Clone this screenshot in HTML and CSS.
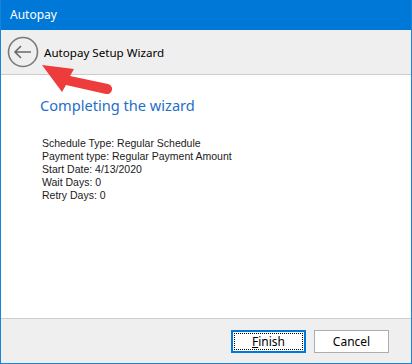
FILE: index.html
```html
<html>
<head>
<meta charset="utf-8">
<title>Autopay</title>
<link rel="stylesheet" href="styles.css">
</head>
<body>
<div class="window">
  <div class="titlebar">Autopay</div>
  <div class="header">
    <svg class="back" width="32" height="32" viewBox="0 0 32 32">
      <circle cx="16" cy="16" r="14.5" fill="none" stroke="#7a7a7a" stroke-width="1.6"/>
      <path d="M8 16 H24 M14 10 L8 16 L14 22" fill="none" stroke="#6a6a6a" stroke-width="1.6"/>
    </svg>
    <span class="wizard-title">Autopay Setup Wizard</span>
  </div>
  <div class="content">
    <h2>Completing the wizard</h2>
    <div class="summary">
      Schedule Type: Regular Schedule<br>
      Payment type: Regular Payment Amount<br>
      Start Date: 4/13/2020<br>
      Wait Days: 0<br>
      Retry Days: 0
    </div>
  </div>
  <div class="footer">
    <button class="btn default"><u>F</u>inish</button>
    <button class="btn">Cancel</button>
  </div>
  <svg class="arrow" width="80" height="40" viewBox="0 0 80 40">
    <path d="M6 7 L38 11 L34 18 L72 26 A4.8 4.8 0 0 1 70 36 L30 27 L26 34 Z" fill="#ee3b3b"/>
  </svg>
</div>
</body>
</html>
```

FILE: styles.css
```css
html, body {
	margin: 0;
	padding: 0;
	background: #FFFFFF;
}
.window {
	position: relative;
	width: 410px;
	height: 363px;
	border: 1px solid #1883d7;
	border-top: none;
	display: flex;
	flex-direction: column;
	font-family: 'Liberation Sans', Arial, sans-serif;
}
.titlebar {
	height: 30px;
	background: #0078d7;
	color: #FFFFFF;
	font-family: 'Noto Sans', sans-serif;
	font-size: 12px;
	line-height: 30px;
	padding-left: 9px;
}
.header {
	height: 44px;
	background: #EFEFEF;
	border-bottom: 1px solid #CCCCCC;
	display: flex;
	align-items: center;
	padding-left: 6px;
}
.back {
	margin-right: 5px;
}
.wizard-title {
	font-family: 'Noto Sans', sans-serif;
	font-size: 11.6px;
	color: #000000;
}
.content {
	flex: 1;
	background: #FFFFFF;
	padding-left: 39px;
}
.content h2 {
	margin: 20px 0 0 0;
	font-family: 'Noto Sans', sans-serif;
	font-weight: normal;
	font-size: 14.6px;
	color: #1e6fc8;
}
.summary {
	margin-top: 22px;
	margin-left: 2px;
	font-size: 10.5px;
	line-height: 13px;
	color: #1a1a1a;
}
.footer {
	height: 45px;
	background: #EFEFEF;
	border-top: 1px solid #CCCCCC;
	display: flex;
	justify-content: flex-end;
	align-items: flex-start;
	padding: 11px 22px 0 0;
	box-sizing: border-box;
	gap: 8px;
}
.btn {
	width: 75px;
	height: 23px;
	background: #FFFFFF;
	border: 1px solid #ADADAD;
	font-family: 'Noto Sans', sans-serif;
	font-size: 12px;
	color: #000000;
	padding: 0;
}
.btn.default {
	border: 2px solid #0078d7;
	outline: 1px dotted #000000;
	outline-offset: -4px;
}
.arrow {
	position: absolute;
	left: 35px;
	top: 58px;
}
```
